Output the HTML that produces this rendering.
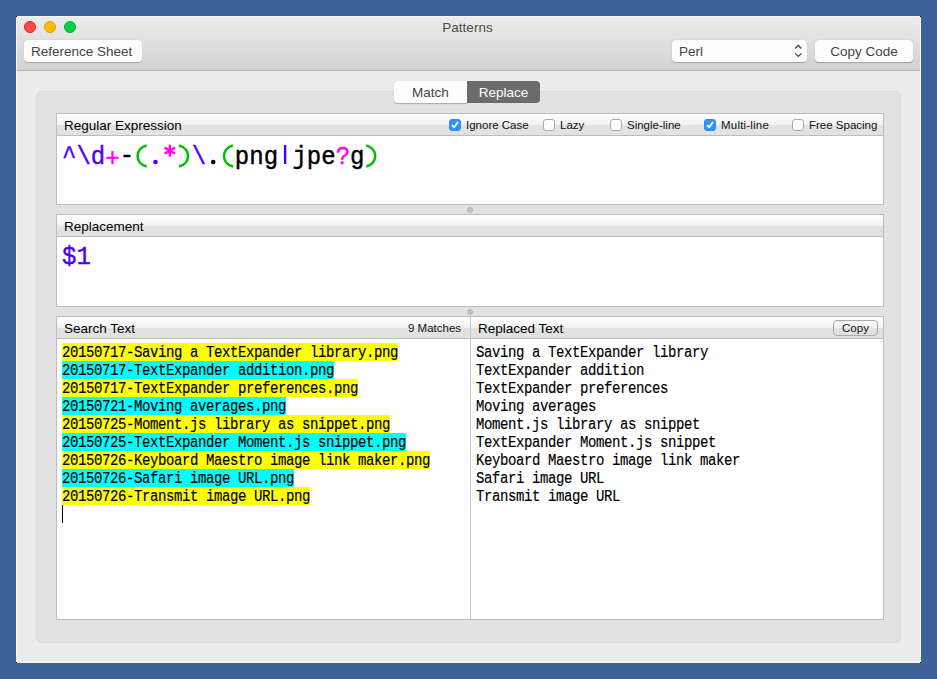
<!DOCTYPE html>
<html><head><meta charset="utf-8">
<style>
*{margin:0;padding:0;box-sizing:border-box}
html,body{width:937px;height:679px;overflow:hidden}
body{background:#3c6299;font-family:"Liberation Sans",sans-serif;position:relative}
.a{position:absolute}
#win{left:16px;top:16px;width:905px;height:647px;background:#ececec;border:1px solid #f8f8f8}
.bk{width:1px;height:1px;background:#000}
#tb{left:17px;top:16px;width:903px;height:55px;background:linear-gradient(#ebebeb,#d3d3d3);border-bottom:1px solid #b2b2b2;border-top:1px solid #f6f6f6}
.tl{width:12px;height:12px;border-radius:50%;top:21px}
.title{left:0;width:935px;top:20px;text-align:center;font-size:13.5px;color:#4d4d4d}
.btn{height:22px;top:40px;background:#fdfdfd;border-radius:4px;box-shadow:0 0.5px 1px rgba(0,0,0,0.25);font-size:13.5px;color:#444;line-height:23px}
#grp{left:36px;top:91px;width:865px;height:552px;background:#e2e2e2;border:1px solid #dcdcdc;border-radius:5px}
.seg{top:81px;height:22px;font-size:13.5px;line-height:23px;text-align:center}
.panel{left:56px;width:828px;background:#fff;border:1px solid #bdbdbd}
.hdr{left:0;top:0;right:0;height:22px;border-bottom:1px solid #bdbdbd;background:linear-gradient(#fff 0,#f1f1f1 11px,#e2e2e2 11px,#e2e2e2 21px)}
.hl{font-size:13.5px;color:#000;top:3px;line-height:17px}
.cb{width:12px;height:12px;border-radius:3px;top:5px;background:#fff;border:1px solid #aaa}
.cb.on{background:#3291ff;border-color:#2f8af5}
.cb svg{position:absolute;left:-1px;top:-1px}
.cbl{font-size:11.5px;color:#111;top:4px;line-height:14px}
.dot{width:6px;height:6px;border-radius:50%;background:#c2c2c2;border:1px solid #b4b4b4}
.mono{font-family:"Liberation Mono",monospace}
.big{font-size:24px;line-height:30px;-webkit-text-stroke:0.4px currentColor;transform:scaleY(1.1);transform-origin:0 0}
.code{font-size:14px;letter-spacing:-0.4px;line-height:16.07px;white-space:pre;color:#000;transform:scaleY(1.12);transform-origin:0 0;-webkit-text-stroke:0.15px #000}
.sp{position:relative;top:2px}.sm{position:relative;top:-1px}.pu{color:#4b00ff}.mg{color:#ff00ff}.gr{color:#00c000}
.y{background:#ffff00}.c{background:#00ffff}
</style></head><body>
<div id="win" class="a"></div>
<div id="tb" class="a"></div>
<div class="a bk" style="left:16px;top:16px"></div><div class="a bk" style="left:920px;top:16px"></div><div class="a bk" style="left:16px;top:662px"></div><div class="a bk" style="left:920px;top:662px"></div>
<div class="a tl" style="left:24px;background:#ff4a4a;border:1px solid #e81b1f"></div>
<div class="a tl" style="left:44px;background:#ffbb00;border:1px solid #e19e00"></div>
<div class="a tl" style="left:64px;background:#00cf4c;border:1px solid #00ac38"></div>
<div class="a title">Patterns</div>
<div class="a btn" style="left:24px;width:118px;padding-left:7px">Reference Sheet</div>
<div class="a btn" style="left:672px;width:135px;padding-left:7px">Perl
  <svg class="a" style="left:121px;top:4px" width="12" height="14" viewBox="0 0 12 14"><path d="M2.2 4.5 L5.3 1.5 L8.4 4.5 M2.2 9.4 L5.3 12.4 L8.4 9.4" fill="none" stroke="#444" stroke-width="1.3"/></svg>
</div>
<div class="a btn" style="left:815px;width:98px;text-align:center">Copy Code</div>

<div id="grp" class="a"></div>
<div class="a seg" style="left:394px;width:73px;background:#fdfdfd;border-radius:4px 0 0 4px;box-shadow:0 0.5px 1px rgba(0,0,0,0.25);color:#444">Match</div>
<div class="a seg" style="left:467px;width:73px;background:#6b6b6b;border-radius:0 4px 4px 0;color:#fff">Replace</div>

<!-- Regex panel -->
<div class="a panel" style="top:113px;height:92px">
  <div class="a hdr">
    <div class="a hl" style="left:7px">Regular Expression</div>
    <div class="a cb on" style="left:392px"><svg width="12" height="12" viewBox="0 0 12 12"><path d="M3.5 6.7 L5.2 8.3 L8.5 3.5" fill="none" stroke="#fff" stroke-width="1.8" stroke-linecap="round" stroke-linejoin="round"/></svg></div><div class="a cbl" style="left:409px">Ignore Case</div>
    <div class="a cb" style="left:486px"></div><div class="a cbl" style="left:503px">Lazy</div>
    <div class="a cb" style="left:553px"></div><div class="a cbl" style="left:570px">Single-line</div>
    <div class="a cb on" style="left:647px"><svg width="12" height="12" viewBox="0 0 12 12"><path d="M3.5 6.7 L5.2 8.3 L8.5 3.5" fill="none" stroke="#fff" stroke-width="1.8" stroke-linecap="round" stroke-linejoin="round"/></svg></div><div class="a cbl" style="left:664px;letter-spacing:0.2px">Multi-line</div>
    <div class="a cb" style="left:735px"></div><div class="a cbl" style="left:752px">Free Spacing</div>
  </div>
  <svg class="a" style="left:0;top:0" width="400" height="80" viewBox="57 114 400 80">
    <g fill="none" stroke="#00c000" stroke-width="2.6">
      <path d="M146.6 145.4 C134.6 148.4 134.6 163.6 146.6 166.6"/>
      <path d="M179.0 145.4 C191.0 148.4 191.0 163.6 179.0 166.6"/>
      <path d="M233.0 145.4 C221.0 148.4 221.0 163.6 233.0 166.6"/>
      <path d="M366.2 145.4 C378.2 148.4 378.2 163.6 366.2 166.6"/>
    </g>
    <circle cx="155.5" cy="162" r="2.3" fill="#4b00ff"/><circle cx="213.2" cy="162" r="2.3" fill="#000"/>
    <rect x="283.9" y="145" width="2.4" height="19" fill="#4b00ff"/>
    <g fill="none" stroke="#ff00ff" stroke-width="2.4" stroke-linecap="round">
      <path d="M169.8 145.6 V155.6 M165.4 148.1 L174.2 153.1 M165.4 153.1 L174.2 148.1"/>
    </g>
  </svg>
  <div class="a mono big" style="left:5px;top:27px;white-space:pre"><span class="pu">^\d</span><span class="mg sp">+</span><span class="sm">-</span>    <span class="pu">\</span>  png jpe<span class="mg">?</span>g </div>
</div>
<div class="a dot" style="left:467px;top:207px"></div>

<!-- Replacement panel -->
<div class="a panel" style="top:214px;height:93px">
  <div class="a hdr">
    <div class="a hl" style="left:7px">Replacement</div>
  </div>
  <div class="a mono big pu" style="left:5px;top:26px">$1</div>
</div>
<div class="a dot" style="left:467px;top:309px"></div>

<!-- Search panel -->
<div class="a panel" style="top:316px;height:304px">
  <div class="a hdr">
    <div class="a hl" style="left:7px">Search Text</div>
    <div class="a cbl" style="left:351px">9 Matches</div>
    <div class="a hl" style="left:421px">Replaced Text</div>
    <div class="a" style="left:776px;top:3px;width:45px;height:16px;border:1px solid #a8a8a8;border-radius:4px;font-size:11.5px;line-height:14px;text-align:center;color:#111">Copy</div>
  </div>
  <div class="a" style="left:413px;top:0;width:1px;height:302px;background:#c8c8c8"></div>
  <div class="a y" style="left:5px;top:26px;width:336px;height:18px"></div>
  <div class="a c" style="left:5px;top:44px;width:272px;height:18px"></div>
  <div class="a y" style="left:5px;top:62px;width:296px;height:18px"></div>
  <div class="a c" style="left:5px;top:80px;width:224px;height:18px"></div>
  <div class="a y" style="left:5px;top:98px;width:328px;height:18px"></div>
  <div class="a c" style="left:5px;top:116px;width:344px;height:18px"></div>
  <div class="a y" style="left:5px;top:134px;width:368px;height:18px"></div>
  <div class="a c" style="left:5px;top:152px;width:232px;height:18px"></div>
  <div class="a y" style="left:5px;top:170px;width:248px;height:18px"></div>
  <div class="a mono code" style="left:5px;top:27px">20150717-Saving a TextExpander library.png</div>
  <div class="a mono code" style="left:5px;top:45px">20150717-TextExpander addition.png</div>
  <div class="a mono code" style="left:5px;top:63px">20150717-TextExpander preferences.png</div>
  <div class="a mono code" style="left:5px;top:81px">20150721-Moving averages.png</div>
  <div class="a mono code" style="left:5px;top:99px">20150725-Moment.js library as snippet.png</div>
  <div class="a mono code" style="left:5px;top:117px">20150725-TextExpander Moment.js snippet.png</div>
  <div class="a mono code" style="left:5px;top:135px">20150726-Keyboard Maestro image link maker.png</div>
  <div class="a mono code" style="left:5px;top:153px">20150726-Safari image URL.png</div>
  <div class="a mono code" style="left:5px;top:171px">20150726-Transmit image URL.png</div>
  
  <div class="a" style="left:5px;top:188px;width:1px;height:18px;background:#000"></div>
  <div class="a mono code" style="left:419px;top:27px">Saving a TextExpander library</div>
  <div class="a mono code" style="left:419px;top:45px">TextExpander addition</div>
  <div class="a mono code" style="left:419px;top:63px">TextExpander preferences</div>
  <div class="a mono code" style="left:419px;top:81px">Moving averages</div>
  <div class="a mono code" style="left:419px;top:99px">Moment.js library as snippet</div>
  <div class="a mono code" style="left:419px;top:117px">TextExpander Moment.js snippet</div>
  <div class="a mono code" style="left:419px;top:135px">Keyboard Maestro image link maker</div>
  <div class="a mono code" style="left:419px;top:153px">Safari image URL</div>
  <div class="a mono code" style="left:419px;top:171px">Transmit image URL</div>
  
</div>
</body></html>
